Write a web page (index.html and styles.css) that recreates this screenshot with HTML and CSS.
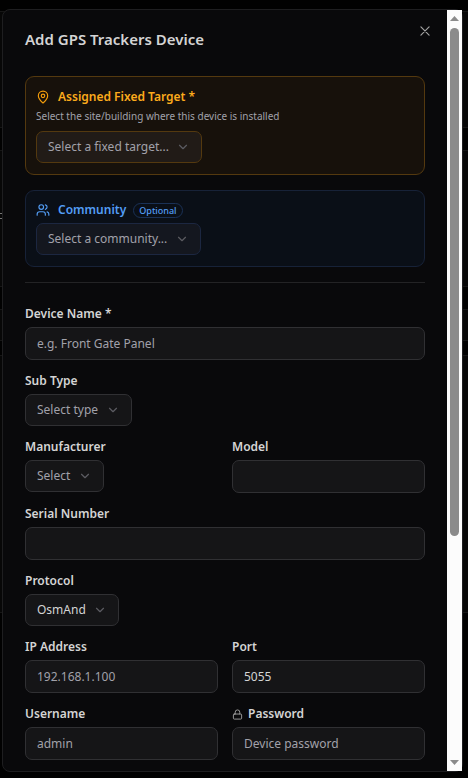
FILE: index.html
```html
<!DOCTYPE html>
<html lang="en">
<head>
<meta charset="utf-8">
<meta name="viewport" content="width=device-width, initial-scale=1">
<title>Add GPS Trackers Device</title>
<link rel="stylesheet" href="styles.css">
</head>
<body>
<svg class="defs" aria-hidden="true">
  <symbol id="chevron" viewBox="0 0 24 24"><path d="m6 9 6 6 6-6"/></symbol>
</svg>
<div class="page">
  <div class="backdrop" aria-hidden="true">
    <div class="panel panel-a"></div>
    <div class="panel panel-b"><span class="tick"></span></div>
    <div class="panel panel-c"></div>
    <div class="panel panel-d"></div>
  </div>
  <main class="dialog" role="dialog" aria-labelledby="title">
    <form class="content">
      <header class="header">
        <h1 id="title">Add GPS Trackers Device</h1>
        <button class="close" type="button" aria-label="Close">
          <svg class="icon" viewBox="0 0 24 24"><path d="M19 5 5 19M5 5l14 14"/></svg>
        </button>
      </header>

      <section class="card amber">
        <label class="card-label" for="target">
          <svg class="icon" viewBox="0 0 24 24"><path d="M20 10c0 5-5.500 10.200-7.400 11.800a1 1 0 0 1-1.200 0C9.500 20.200 4 15 4 10a8 8 0 0 1 16 0"/><circle cx="12" cy="10" r="3"/></svg>
          Assigned Fixed Target *
        </label>
        <p class="hint">Select the site/building where this device is installed</p>
        <div class="select">
          <select id="target"><option>Select a fixed target...</option></select>
          <svg class="chevron"><use href="#chevron"/></svg>
        </div>
      </section>

      <section class="card blue">
        <div class="card-head">
          <label class="card-label" for="community">
            <svg class="icon" viewBox="0 0 24 24"><path d="M16 21v-2a4 4 0 0 0-4-4H6a4 4 0 0 0-4 4v2"/><circle cx="9" cy="7" r="4"/><path d="M22 21v-2a4 4 0 0 0-3-3.870"/><path d="M16 3.130a4 4 0 0 1 0 7.750"/></svg>
            Community
          </label>
          <span class="badge">Optional</span>
        </div>
        <div class="select">
          <select id="community"><option>Select a community...</option></select>
          <svg class="chevron"><use href="#chevron"/></svg>
        </div>
      </section>

      <hr>

      <div class="fields">
        <div class="field wide">
          <label for="name">Device Name *</label>
          <input id="name" type="text" placeholder="e.g. Front Gate Panel">
        </div>
        <div class="field wide">
          <label for="subtype">Sub Type</label>
          <div class="select">
            <select id="subtype"><option>Select type</option></select>
            <svg class="chevron"><use href="#chevron"/></svg>
          </div>
        </div>
        <div class="field">
          <label for="maker">Manufacturer</label>
          <div class="select">
            <select id="maker"><option>Select</option></select>
            <svg class="chevron"><use href="#chevron"/></svg>
          </div>
        </div>
        <div class="field">
          <label for="model">Model</label>
          <input id="model" type="text">
        </div>
        <div class="field wide">
          <label for="serial">Serial Number</label>
          <input id="serial" type="text">
        </div>
        <div class="field wide">
          <label for="protocol">Protocol</label>
          <div class="select filled">
            <select id="protocol"><option>OsmAnd</option></select>
            <svg class="chevron"><use href="#chevron"/></svg>
          </div>
        </div>
        <div class="field">
          <label for="ip">IP Address</label>
          <input id="ip" type="text" placeholder="192.168.1.100">
        </div>
        <div class="field">
          <label for="port">Port</label>
          <input id="port" type="text" value="5055">
        </div>
        <div class="field">
          <label for="user">Username</label>
          <input id="user" type="text" placeholder="admin">
        </div>
        <div class="field">
          <label for="password">
            <svg class="lock" viewBox="0 0 24 24"><rect x="3" y="11" width="18" height="11" rx="2"/><path d="M7 11V7a5 5 0 0 1 10 0v4"/></svg>
            Password
          </label>
          <input id="password" type="password" placeholder="Device password">
        </div>
      </div>
    </form>
    <div class="scrollbar" aria-hidden="true">
      <svg class="arrow" viewBox="0 0 9 5"><path d="M0 5 4.500 0 9 5z"/></svg>
      <div class="track"><div class="thumb"></div></div>
      <svg class="arrow" viewBox="0 0 9 5"><path d="M0 0h9L4.500 5z"/></svg>
    </div>
  </main>
</div>
</body>
</html>
```
FILE: styles.css
```css
* { box-sizing: border-box; }

body {
  margin: 0;
  background: #010101;
  color: #d4d4d4;
  font: 12px/18px "Noto Sans", "Open Sans", sans-serif;
}

h1, p { margin: 0; }

svg {
  display: block;
  flex: none;
  fill: none;
  stroke: currentColor;
  stroke-width: 2;
  stroke-linecap: round;
  stroke-linejoin: round;
}

.defs { width: 0; height: 0; position: absolute; }

.page {
  display: grid;
  min-height: 100vh;
}

.backdrop, .dialog { grid-area: 1 / 1; }

/* Dimmed list behind the dialog */
.backdrop {
  display: flex;
  flex-direction: column;
  padding-top: 11px;
}

.panel {
  background: #070707;
  border: 1px solid #161616;
  border-width: 1px 0;
}

.panel-a { height: 117px; margin-bottom: 22px; }
.panel-b { height: 137px; margin-bottom: 22px; padding-top: 62px; }
.panel-c { height: 32px; margin-bottom: 14px; }
.panel-d { height: 258px; }

.tick {
  display: block;
  width: 2px;
  height: 6px;
  border: 1px solid #777;
  border-width: 1px 0;
}

.dialog {
  position: relative;
  display: flex;
  align-self: start;
  margin: 9px 5px 7px 2px;
  background: #09090b;
  border: 1px solid #1e1e20;
  border-radius: 8px;
}

.content {
  flex: 1;
  min-width: 0;
  padding: 19px 22px 11px;
}

.header {
  display: flex;
  justify-content: space-between;
  margin-bottom: 27px;
}

h1 {
  font-size: 15px;
  line-height: 20px;
  font-weight: 600;
}

.close {
  width: 14px;
  height: 14px;
  margin: -5px -7px 0 0;
  padding: 0;
  border: 0;
  background: none;
  color: #a3a3a3;
}

.icon { width: 14px; height: 14px; }

.card {
  border: 1px solid;
  border-radius: 9px;
  padding: 11px 10px;
  margin-bottom: 15px;
}

.amber { background: #17110b; border-color: #54390f; }
.blue { background: #0a0f17; border-color: #172238; }

.card-head {
  display: flex;
  align-items: center;
  gap: 7px;
  margin: -1px 0 4px;
}

.card-label {
  display: flex;
  align-items: center;
  gap: 8px;
  font-weight: 600;
}

.amber .card-label { color: #fcab1c; margin-bottom: 2px; }
.amber .icon { color: #f59e0b; }
.blue .card-label { color: #539df5; }

.hint {
  color: #a1a1aa;
  font-size: 10px;
  line-height: 16px;
  margin-bottom: 7px;
}

.badge {
  border: 1px solid #1a3156;
  border-radius: 8px;
  padding: 0 5px;
  color: #539df5;
  font-size: 9px;
  line-height: 13px;
  font-weight: 500;
}

.select {
  display: grid;
  justify-content: start;
  align-items: center;
  color: #a1a1aa;
}

.select > * { grid-area: 1 / 1; }

.filled { color: #d4d4d4; }

select, input {
  height: 33px;
  margin: 0;
  padding: 0 11px;
  border: 1px solid #303033;
  border-radius: 7px;
  background: #151517;
  color: inherit;
  font: inherit;
}

input { width: 100%; }

input::placeholder { color: #a1a1aa; opacity: 1; }

select {
  appearance: none;
  height: 32px;
  padding-right: 32px;
}

.amber select { background: #211b17; border-color: #54390f; }
.blue select { background: #14171f; border-color: #1c2741; }

.chevron {
  width: 14px;
  height: 14px;
  margin-right: 12px;
  justify-self: end;
  color: #5c5c62;
  pointer-events: none;
}

hr {
  margin: 0 0 22px;
  border: 0;
  border-top: 1px solid #232325;
}

.fields {
  display: grid;
  grid-template-columns: 1fr 1fr;
  gap: 12px 14px;
}

.wide { grid-column: 1 / -1; }

.field > label {
  display: flex;
  align-items: center;
  gap: 5px;
  margin-bottom: 4px;
  font-weight: 600;
}

.lock { width: 11px; height: 11px; color: #a3a3a3; }

.scrollbar {
  display: flex;
  flex-direction: column;
  align-items: center;
  width: 15px;
  padding: 6px 0;
  background: #fcfcfc;
}

.arrow {
  width: 9px;
  height: 5px;
  fill: #8b8b8b;
  stroke: none;
}

.track {
  flex: 1;
  width: 9px;
  padding: 7px 0;
}

.thumb {
  height: 70%;
  border-radius: 5px;
  background: #8b8b8b;
}
```
